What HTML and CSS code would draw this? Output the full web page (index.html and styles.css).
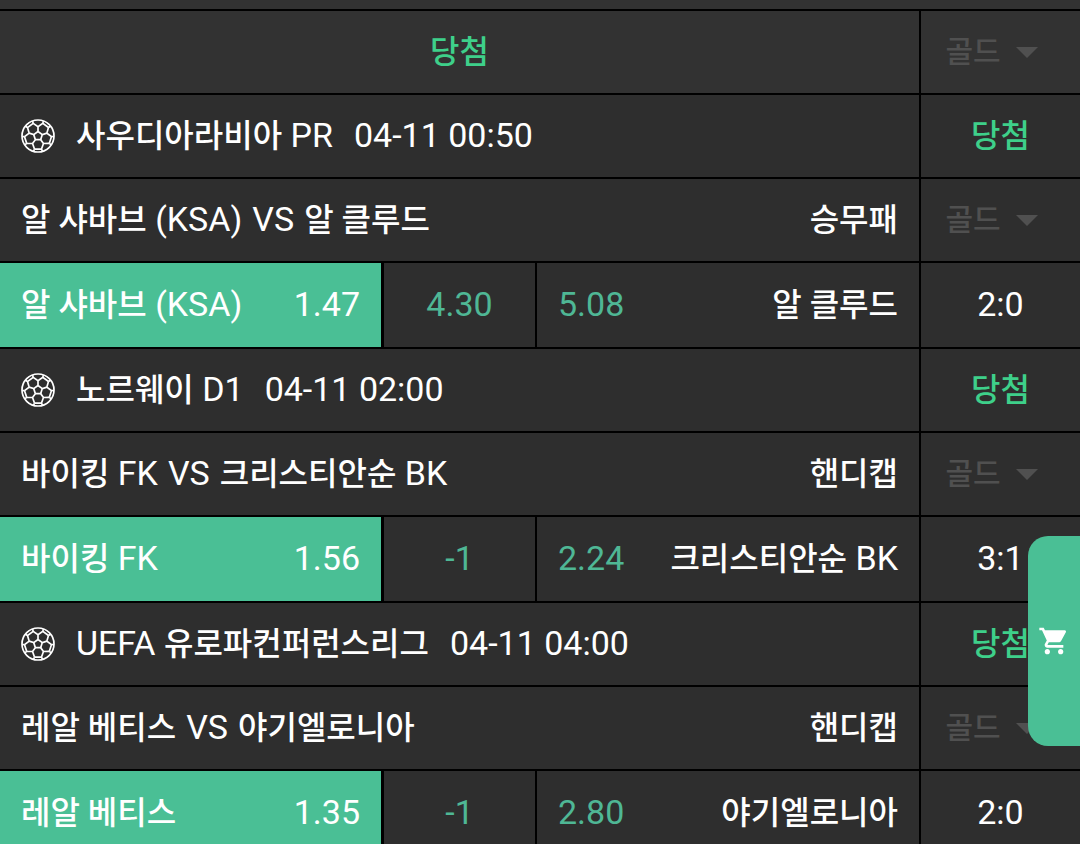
FILE: index.html
```html
<!DOCTYPE html>
<html lang="ko">
<head>
    <meta charset="UTF-8">
    <meta name="viewport" content="width=device-width, initial-scale=1.0">
    <title>당첨</title>
    <link rel="stylesheet" href="styles.css">
</head>
<body>
    <svg class="sprite" aria-hidden="true">
        <defs>
            <g id="ball-arm">
                <path d="M4.3 -1.4L0 -4.5V-9.3M-4.8 -12.6L0 -9.3L4.8 -12.6L10.5 -8.5M4.8 -12.6L5.4 -15M-4.8 -12.6L-5.4 -15"/>
            </g>
            <symbol id="ball" viewBox="-17 -17 34 34">
                <circle r="16"/>
                <use href="#ball-arm"/>
                <use href="#ball-arm" transform="rotate(72)"/>
                <use href="#ball-arm" transform="rotate(144)"/>
                <use href="#ball-arm" transform="rotate(216)"/>
                <use href="#ball-arm" transform="rotate(288)"/>
            </symbol>
        </defs>
    </svg>

    <main class="slip">
        <!-- Summary -->
        <div class="row summary">
            <div class="cell center win"><span class="ko">당첨</span></div>
            <div class="cell center">
                <label class="picker"><select aria-label="골드"><option>골드</option></select></label>
            </div>
        </div>

        <!-- Match 1 -->
        <div class="row">
            <div class="cell league">
                <svg class="ball"><use href="#ball"/></svg>
                <span class="name"><span class="ko">사우디아라비아</span> PR</span>
                <time>04-11 00:50</time>
            </div>
            <div class="cell center win"><span class="ko">당첨</span></div>
        </div>
        <div class="row">
            <div class="cell match">
                <div class="teams">
                    <span><span class="ko">알 샤바브</span> (KSA)</span>
                    <span>VS</span>
                    <span class="ko">알 클루드</span>
                </div>
                <span class="ko">승무패</span>
            </div>
            <div class="cell center">
                <label class="picker"><select aria-label="골드"><option>골드</option></select></label>
            </div>
        </div>
        <div class="row bets-row">
            <div class="bets">
                <button type="button" class="bet active"><span class="name"><span class="ko">알 샤바브</span> (KSA)</span><span class="odds">1.47</span></button>
                <button type="button" class="bet draw"><span class="odds">4.30</span></button>
                <button type="button" class="bet"><span class="odds">5.08</span><span class="ko">알 클루드</span></button>
            </div>
            <div class="cell center"><span class="score">2:0</span></div>
        </div>

        <!-- Match 2 -->
        <div class="row">
            <div class="cell league">
                <svg class="ball"><use href="#ball"/></svg>
                <span class="name"><span class="ko">노르웨이</span> D1</span>
                <time>04-11 02:00</time>
            </div>
            <div class="cell center win"><span class="ko">당첨</span></div>
        </div>
        <div class="row">
            <div class="cell match">
                <div class="teams">
                    <span><span class="ko">바이킹</span> FK</span>
                    <span>VS</span>
                    <span><span class="ko">크리스티안순</span> BK</span>
                </div>
                <span class="ko">핸디캡</span>
            </div>
            <div class="cell center">
                <label class="picker"><select aria-label="골드"><option>골드</option></select></label>
            </div>
        </div>
        <div class="row bets-row">
            <div class="bets">
                <button type="button" class="bet active"><span class="name"><span class="ko">바이킹</span> FK</span><span class="odds">1.56</span></button>
                <button type="button" class="bet draw"><span class="odds">-1</span></button>
                <button type="button" class="bet"><span class="odds">2.24</span><span class="name"><span class="ko">크리스티안순</span> BK</span></button>
            </div>
            <div class="cell center"><span class="score">3:1</span></div>
        </div>

        <!-- Match 3 -->
        <div class="row">
            <div class="cell league">
                <svg class="ball"><use href="#ball"/></svg>
                <span class="name">UEFA <span class="ko">유로파컨퍼런스리그</span></span>
                <time>04-11 04:00</time>
            </div>
            <div class="cell center win"><span class="ko">당첨</span></div>
        </div>
        <div class="row">
            <div class="cell match">
                <div class="teams">
                    <span class="ko">레알 베티스</span>
                    <span>VS</span>
                    <span class="ko">야기엘로니아</span>
                </div>
                <span class="ko">핸디캡</span>
            </div>
            <div class="cell center">
                <label class="picker"><select aria-label="골드"><option>골드</option></select></label>
            </div>
        </div>
        <div class="row bets-row">
            <div class="bets">
                <button type="button" class="bet active"><span class="ko">레알 베티스</span><span class="odds">1.35</span></button>
                <button type="button" class="bet draw"><span class="odds">-1</span></button>
                <button type="button" class="bet"><span class="odds">2.80</span><span class="ko">야기엘로니아</span></button>
            </div>
            <div class="cell center"><span class="score">2:0</span></div>
        </div>
    </main>

    <button type="button" class="cart" aria-label="카트">
        <svg viewBox="0 0 24 24"><path d="M7 18c-1.1 0-1.99.9-1.99 2S5.9 22 7 22s2-.9 2-2-.9-2-2-2zM1 2v2h2l3.6 7.59-1.35 2.45c-.16.28-.25.61-.25.96 0 1.1.9 2 2 2h12v-2H7.42c-.14 0-.25-.11-.25-.25l.03-.12.9-1.63h7.45c.75 0 1.41-.41 1.75-1.03l3.58-6.49c.08-.14.12-.31.12-.48 0-.55-.45-1-1-1H5.21l-.94-2H1zm16 16c-1.1 0-1.99.9-1.99 2s.89 2 1.99 2 2-.9 2-2-.9-2-2-2z"/></svg>
    </button>
</body>
</html>
```
FILE: styles.css
```css
* {
    box-sizing: border-box;
}

html, body {
    height: 100%;
    margin: 0;
}

body {
    overflow: hidden;
    background-color: #323232;
    color: #fff;
    font-family: Roboto, 'Noto Sans CJK KR', sans-serif;
    font-size: 34px;
    line-height: 40px;
}

button, select {
    font-family: inherit;
    font-size: inherit;
    line-height: inherit;
    color: inherit;
    border: none;
    margin: 0;
    cursor: pointer;
}

.sprite {
    position: absolute;
    width: 0;
    height: 0;
}

.ko {
    font-size: 32px;
    font-weight: 500;
}

.slip {
    display: flex;
    flex-direction: column;
    gap: 2px;
    padding-top: 2px;
    margin-top: 9px;
    background-color: #000;
}

.row {
    display: grid;
    grid-template-columns: minmax(0, 1fr) 159px;
    gap: 2px;
    min-height: 82px;
}

.bets-row {
    min-height: 84px;
}

.cell {
    display: flex;
    align-items: center;
    padding: 0 21px;
    background-color: #2e2e2e;
    white-space: nowrap;
}

.summary .cell {
    background-color: #323232;
}

.center {
    justify-content: center;
}

.win {
    color: #3ed08a;
}

.name,
.teams,
.odds,
.score,
time {
    padding-bottom: 2px;
}

.league {
    gap: 21px;
}

.ball {
    width: 34px;
    height: 34px;
    fill: none;
    stroke: #fff;
    stroke-width: 1.7;
}

.match {
    justify-content: space-between;
}

.teams {
    display: flex;
    align-items: baseline;
    gap: 10px;
}

/* Odds buttons */
.bets {
    display: grid;
    grid-template-columns: minmax(0, 1fr) 151px minmax(0, 1fr);
    gap: 2px;
}

.bet {
    display: flex;
    align-items: center;
    justify-content: space-between;
    padding: 0 21px;
    background-color: #2e2e2e;
    white-space: nowrap;
}

.bet.draw {
    justify-content: center;
}

.odds {
    color: #4fb795;
}

.bet.active {
    background-color: #4abf95;
    border-right: 1px solid #000;
}

.bet.active .odds {
    color: #fff;
}

/* Currency drop-down */
.picker {
    display: flex;
    align-items: center;
    gap: 14px;
    padding-right: 18px;
    color: #505050;
}

.picker::after {
    content: '';
    border: 11px solid transparent;
    border-top-color: #505050;
    border-bottom: none;
}

.picker select {
    appearance: none;
    padding: 0;
    background: none;
    font-size: 30px;
    font-weight: 500;
}

/* Floating cart tab */
.cart {
    position: fixed;
    right: 0;
    top: 536px;
    width: 52px;
    height: 210px;
    padding: 0;
    display: flex;
    align-items: center;
    justify-content: center;
    border-radius: 20px 0 0 20px;
    background-color: #4abf95;
}

.cart svg {
    width: 32px;
    height: 32px;
    fill: #fff;
}
```
